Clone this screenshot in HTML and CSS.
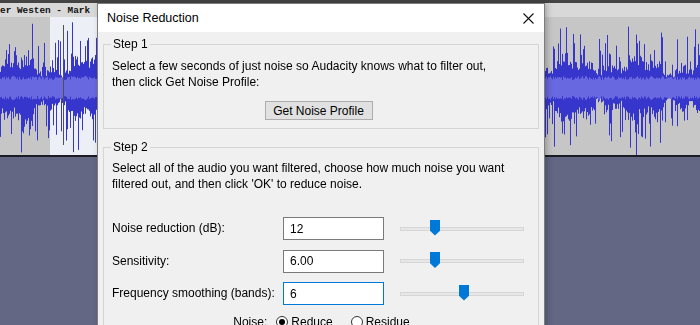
FILE: index.html
```html
<!DOCTYPE html>
<html lang="en">
<head>
    <meta charset="UTF-8">
    <meta name="viewport" content="width=device-width, initial-scale=1.0">
    <title>Noise Reduction</title>
    <link rel="stylesheet" href="styles.css">
</head>
<body>
    <div class="track">
        <div class="track-head">er Westen - Mark</div>
        <canvas class="wave" width="700" height="138"></canvas>
    </div>

    <div class="dialog">
        <div class="titlebar">
            <span>Noise Reduction</span>
            <svg class="close" width="11" height="11" viewBox="0 0 11 11">
                <path d="M0.5 0.5 L10.5 10.5 M10.5 0.5 L0.5 10.5" stroke="#111" stroke-width="1.1" fill="none"/>
            </svg>
        </div>
        <div class="dialog-body">
            <fieldset class="group step1">
                <legend>Step 1</legend>
                <p>Select a few seconds of just noise so Audacity knows what to filter out,<br>then click Get Noise Profile:</p>
                <button class="btn">Get Noise Profile</button>
            </fieldset>

            <fieldset class="group step2">
                <legend>Step 2</legend>
                <p>Select all of the audio you want filtered, choose how much noise you want<br>filtered out, and then click 'OK' to reduce noise.</p>

                <div class="controls">
                    <label>Noise reduction (dB):</label>
                    <input class="field" type="text" value="12">
                    <div class="slider"><span class="thumb" style="left: 29px;"></span></div>

                    <label>Sensitivity:</label>
                    <input class="field" type="text" value="6.00">
                    <div class="slider"><span class="thumb" style="left: 29px;"></span></div>

                    <label>Frequency smoothing (bands):</label>
                    <input class="field focused" type="text" value="6">
                    <div class="slider"><span class="thumb" style="left: 58px;"></span></div>
                </div>

                <div class="noise-row">
                    <span>Noise:</span>
                    <span class="radio checked"></span><span class="opt">Reduce</span>
                    <span class="radio"></span><span class="opt">Residue</span>
                </div>
            </fieldset>
        </div>
    </div>

    <script src="script.js"></script>
</body>
</html>
```

FILE: styles.css
```css
body {
    margin: 0;
    width: 700px;
    height: 325px;
    overflow: hidden;
    position: relative;
    background-color: #636784;
    font-family: 'Liberation Sans', Arial, sans-serif;
    font-size: 12px;
    color: #000;
}
.track {
    border-top: 3px solid #444;
    border-bottom: 2px solid #1c1c24;
}
.track-head {
    height: 14px;
    line-height: 15px;
    background: #d8d8d8;
    font-family: 'Liberation Mono', monospace;
    font-size: 9.4px;
    font-weight: bold;
    color: #111;
    white-space: nowrap;
}
.wave {
    display: block;
}

/* dialog sits over the track view */
.dialog {
    position: absolute;
    left: 97px;
    top: 3px;
    width: 446px;
    height: 340px;
    border: 1px solid #7d7d7d;
    background: #f0f0f0;
    box-shadow: 2px 0 6px rgba(0, 0, 0, 0.25);
}
.titlebar {
    height: 28px;
    background: #fff;
    display: flex;
    align-items: center;
    justify-content: space-between;
    padding: 0 9px 0 9px;
    font-size: 12.5px;
}
.close {
    margin-right: 1px;
}
.dialog-body {
    padding: 0 5px;
}
.group {
    border: 1px solid #d5d5d5;
    margin: 4px 0 0 0;
    padding: 6px 7px 8px 8px;
}
.group legend {
    padding: 0 2px;
    margin-left: -1px;
    line-height: 16px;
}
.group p {
    margin: 0;
    line-height: 16px;
}
.step2 {
    margin-top: 10px;
    padding-top: 5px;
}
.btn {
    display: block;
    margin: 11px auto 0 auto;
    width: 108px;
    height: 19px;
    padding: 0;
    background: #e1e1e1;
    border: 1px solid #adadad;
    font-family: inherit;
    font-size: 12px;
    color: #000;
    position: relative;
    left: -3px;
}
.controls {
    display: grid;
    grid-template-columns: 171px 101px 140px;
    row-gap: 9.5px;
    align-items: center;
    margin-top: 25px;
}
.controls label {
    line-height: 23px;
}
.field {
    box-sizing: border-box;
    width: 101px;
    height: 23px;
    border: 1px solid #7a7a7a;
    background: #fff;
    padding: 0 6px;
    font-family: inherit;
    font-size: 12px;
    color: #000;
    outline: none;
}
.field.focused {
    border-color: #0078d7;
}
.slider {
    position: relative;
    margin-left: 16px;
    height: 2px;
    background: #e7e7e7;
    border: 1px solid #d6d6d6;
}
.thumb {
    position: absolute;
    top: -8px;
    width: 10px;
    height: 16px;
    background: #0078d7;
    clip-path: polygon(0 0, 100% 0, 100% 70%, 50% 100%, 0 70%);
}
.noise-row {
    display: flex;
    align-items: center;
    justify-content: center;
    margin-top: 9px;
    line-height: 16px;
}
.noise-row .radio {
    box-sizing: border-box;
    width: 12px;
    height: 12px;
    border: 1px solid #333;
    border-radius: 50%;
    background: #fff;
    margin-left: 9px;
    display: flex;
    align-items: center;
    justify-content: center;
}
.noise-row .radio + .opt {
    margin-left: 3px;
}
.noise-row .opt + .radio {
    margin-left: 18px;
}
.radio.checked::after {
    content: '';
    width: 6px;
    height: 6px;
    border-radius: 50%;
    background: #000;
}
```

FILE: script.js
```js
const canvas = document.querySelector('.wave');
const ctx = canvas.getContext('2d');
const mid = 71; // centre line of the track

let seed = 4217;
function rand() {
    seed = (seed * 16807) % 2147483647;
    return seed / 2147483647;
}

// track background + selected region
ctx.fillStyle = '#c6c6c6';
ctx.fillRect(0, 0, canvas.width, canvas.height);
ctx.fillStyle = '#eceff6';
ctx.fillRect(50, 0, 47, canvas.height);

for (let x = 0; x < canvas.width; x++) {
    const env = 21 + 6 * Math.sin(x / 11) + 4 * Math.sin(x / 3.7);
    let up = env * (0.75 + rand() * 0.5);
    let down = env * (0.75 + rand() * 0.5);
    if (rand() < 0.35) up += rand() * 38;
    if (rand() < 0.35) down += rand() * 38;

    ctx.fillStyle = '#3636cc';
    ctx.fillRect(x, mid - up, 1, up + down);

    const rms = 8 + rand() * 4;
    ctx.fillStyle = '#6868e0';
    ctx.fillRect(x, mid - rms, 1, rms * 2);
}

// cursor line
ctx.fillStyle = '#505050';
ctx.fillRect(63, 8, 1, 120);
```
